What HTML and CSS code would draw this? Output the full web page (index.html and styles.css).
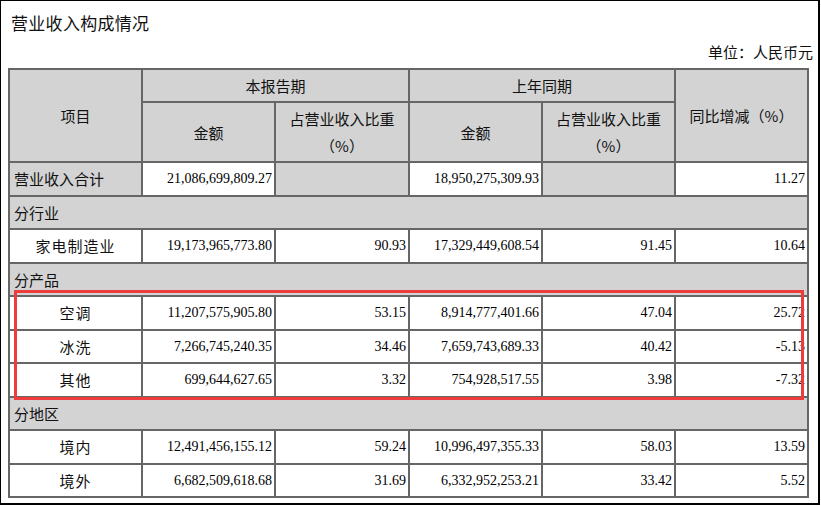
FILE: index.html
```html
<!DOCTYPE html>
<html lang="zh-CN">
<head>
<meta charset="utf-8">
<title>营业收入构成情况</title>
<link rel="stylesheet" href="styles.css">
</head>
<body>
<div class="frame">
  <div class="title">营业收入构成情况</div>
  <div class="unit">单位：人民币元</div>
  <div class="table-wrap">
    <table class="rev">
      <colgroup>
        <col class="c1"><col class="c2"><col class="c3"><col class="c4"><col class="c5"><col class="c6">
      </colgroup>
      <thead>
        <tr class="h1">
          <th rowspan="2">项目</th>
          <th colspan="2">本报告期</th>
          <th colspan="2">上年同期</th>
          <th rowspan="2" class="yoy">同比增减（%）</th>
        </tr>
        <tr class="h2">
          <th>金额</th>
          <th>占营业收入比重<br>（%）</th>
          <th>金额</th>
          <th>占营业收入比重<br>（%）</th>
        </tr>
      </thead>
      <tbody>
        <tr>
          <td class="lbl-left gray">营业收入合计</td>
          <td class="num">21,086,699,809.27</td>
          <td class="gray"></td>
          <td class="num">18,950,275,309.93</td>
          <td class="gray"></td>
          <td class="num">11.27</td>
        </tr>
        <tr><td colspan="6" class="section">分行业</td></tr>
        <tr>
          <td class="lbl">家电制造业</td>
          <td class="num">19,173,965,773.80</td>
          <td class="num">90.93</td>
          <td class="num">17,329,449,608.54</td>
          <td class="num">91.45</td>
          <td class="num">10.64</td>
        </tr>
        <tr><td colspan="6" class="section">分产品</td></tr>
        <tr>
          <td class="lbl">空调</td>
          <td class="num">11,207,575,905.80</td>
          <td class="num">53.15</td>
          <td class="num">8,914,777,401.66</td>
          <td class="num">47.04</td>
          <td class="num">25.72</td>
        </tr>
        <tr>
          <td class="lbl">冰洗</td>
          <td class="num">7,266,745,240.35</td>
          <td class="num">34.46</td>
          <td class="num">7,659,743,689.33</td>
          <td class="num">40.42</td>
          <td class="num">-5.13</td>
        </tr>
        <tr>
          <td class="lbl">其他</td>
          <td class="num">699,644,627.65</td>
          <td class="num">3.32</td>
          <td class="num">754,928,517.55</td>
          <td class="num">3.98</td>
          <td class="num">-7.32</td>
        </tr>
        <tr><td colspan="6" class="section">分地区</td></tr>
        <tr>
          <td class="lbl">境内</td>
          <td class="num">12,491,456,155.12</td>
          <td class="num">59.24</td>
          <td class="num">10,996,497,355.33</td>
          <td class="num">58.03</td>
          <td class="num">13.59</td>
        </tr>
        <tr>
          <td class="lbl">境外</td>
          <td class="num">6,682,509,618.68</td>
          <td class="num">31.69</td>
          <td class="num">6,332,952,253.21</td>
          <td class="num">33.42</td>
          <td class="num">5.52</td>
        </tr>
      </tbody>
    </table>
    <div class="highlight"></div>
  </div>
</div>
</body>
</html>
```
FILE: styles.css
```css
html, body {
  margin: 0;
  padding: 0;
  background: #fff;
}

.frame {
  box-sizing: border-box;
  width: 820px;
  height: 505px;
  border-top: 1px solid #000;
  border-left: 1px solid #000;
  border-right: 2px solid #000;
  border-bottom: 2px solid #000;
  font-family: "Noto Sans CJK SC", "Liberation Sans", sans-serif;
  color: #111;
  display: flex;
  flex-direction: column;
}

.title {
  padding: 11px 0 0 10px;
  font-size: 17px;
  line-height: 22px;
  letter-spacing: 0.3px;
}

.unit {
  margin-top: 8px;
  padding-right: 5px;
  text-align: right;
  font-size: 15px;
  line-height: 20px;
}

.table-wrap {
  position: relative;
  margin: 6px 0 0 7px;
  width: 799px;
}

.rev {
  border-collapse: collapse;
  table-layout: fixed;
  width: 799px;
  font-size: 15px;
}

.c1 { width: 133px; }
.c2 { width: 133px; }
.c3 { width: 134px; }
.c4 { width: 133px; }
.c5 { width: 133px; }
.c6 { width: 133px; }

.rev th,
.rev td {
  border: 2px solid #666;
  padding: 0 2px;
  vertical-align: middle;
  line-height: 27px;
}

.rev th {
  background: #d3d3d3;
  font-weight: normal;
  text-align: center;
}

.h1 th { height: 31px; }
.h2 th { height: 58px; }

.rev tbody td {
  height: 31.5px;
  background: #fff;
}

.rev td.gray { background: #d3d3d3; }

.lbl-left {
  text-align: left;
  padding-left: 4px !important;
}

.lbl {
  text-align: center;
  letter-spacing: 1px;
}

.num {
  text-align: right;
  font-family: "Liberation Serif", "Times New Roman", serif;
  font-size: 14px;
  color: #000;
}

.rev td.section {
  background: #d3d3d3;
  text-align: left;
  padding-left: 4px;
}

.highlight {
  position: absolute;
  left: 6px;
  top: 222px;
  width: 784px;
  height: 104px;
  border: 3px solid #ee3c3c;
  pointer-events: none;
}
```
